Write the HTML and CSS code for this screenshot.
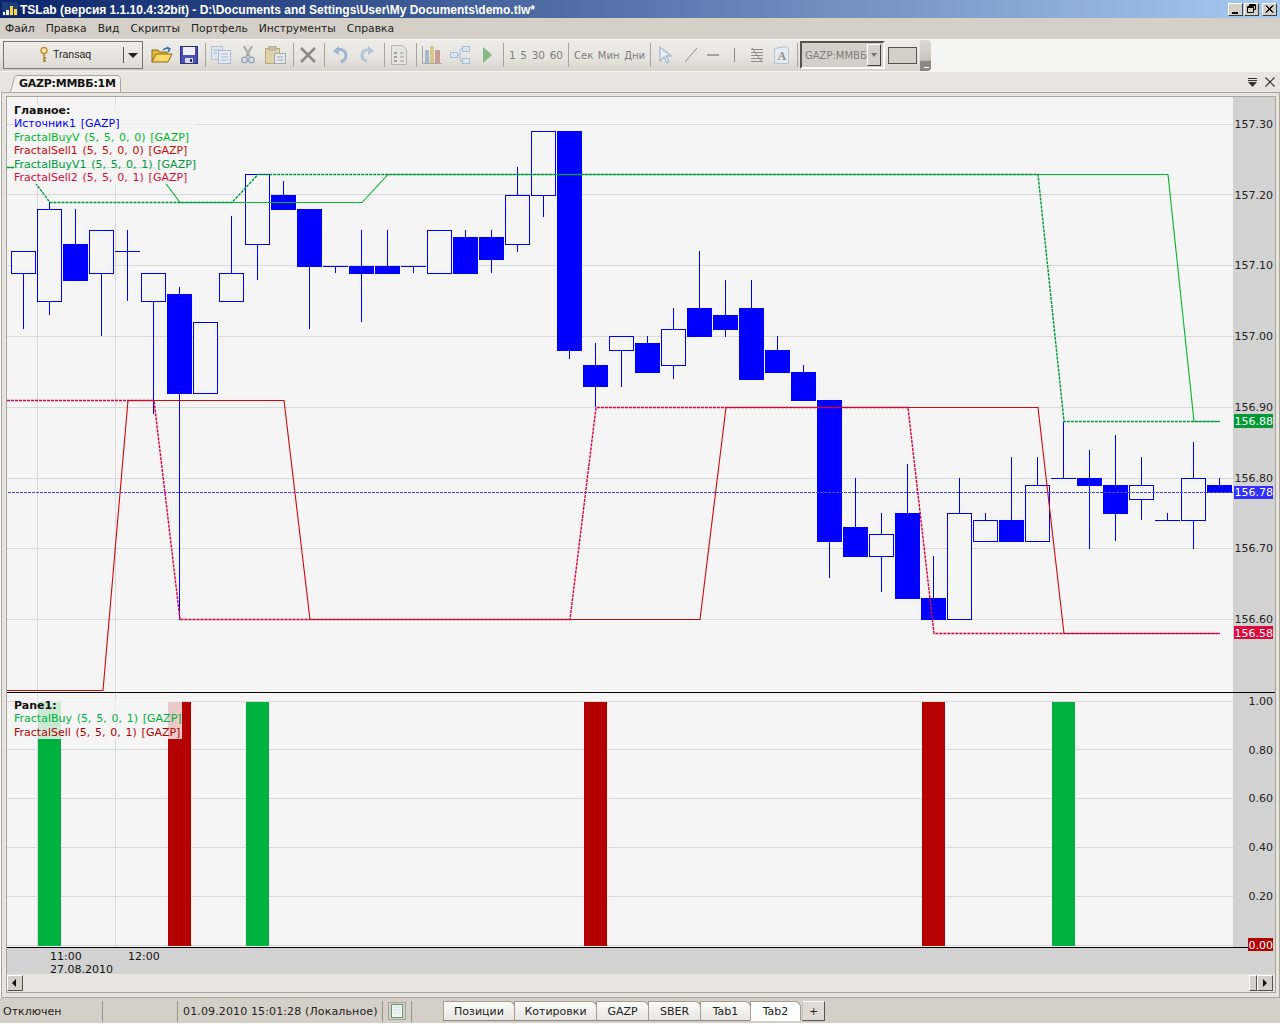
FILE: index.html
```html
<!DOCTYPE html>
<html>
  <head>
    <meta charset="utf-8" />
    <title>TSLab</title>
    <link rel="stylesheet" href="styles.css">
  </head>
  <body>
    <div class="app">
      <div class="titlebar">
        <svg class="app-icon" viewBox="0 0 16 14">
          <rect width="16" height="14" fill="#1c3c78" />
          <rect x="1" y="10" width="2" height="3" fill="#fff" />
          <rect x="4" y="8" width="3" height="5" fill="#fff" />
          <rect x="8" y="4" width="3" height="9" fill="#ffd83c" />
          <rect x="12" y="7" width="3" height="6" fill="#ffd83c" />
        </svg>
        <span class="title-text">TSLab (версия 1.1.10.4:32bit) - D:\Documents and Settings\User\My Documents\demo.tlw*</span>
        <div class="win-btns">
          <span class="win-btn">
            <svg viewBox="0 0 13 11"><rect x="3" y="8" width="6" height="2" /></svg>
          </span>
          <span class="win-btn">
            <svg viewBox="0 0 13 11"><path d="M4.5 2.5V.5h6v5h-2M2.5 2.5h6v6h-6zM2.5 3.5h6M4.5 1.5h6" fill="none" stroke="#000" /></svg>
          </span>
          <span class="win-btn win-close">
            <svg viewBox="0 0 13 11"><path d="M2.5 1.5l7 7M3.5 1.5l7 7M9.5 1.5l-7 7M10.5 1.5l-7 7" fill="none" stroke="#000" /></svg>
          </span>
        </div>
      </div>

      <div class="menubar">
        <span>Файл</span>
        <span>Правка</span>
        <span>Вид</span>
        <span>Скрипты</span>
        <span>Портфель</span>
        <span>Инструменты</span>
        <span>Справка</span>
      </div>

      <div class="toolbar-row">
        <div class="toolbar">
          <div class="conn">
            <svg class="key" viewBox="0 0 8 16">
              <circle cx="4" cy="3.5" r="3" fill="#f8ecc0" stroke="#c08c20" stroke-width="1.4" />
              <path d="M4 6.5V15M4 11h2M4 14h2" fill="none" stroke="#b08020" stroke-width="1.5" />
            </svg>
            <span class="conn-name">Transaq</span>
            <span class="conn-arrow"></span>
          </div>

          <svg class="t-open" viewBox="0 0 22 18">
            <path d="M1 16V4h6l2 2h7v3" fill="#e8b838" stroke="#8a6a18" />
            <path d="M1 16l4-8h16l-4 8z" fill="#f8d868" stroke="#8a6a18" />
            <path d="M12 4q3-3 6-1M16 1l3 2-2 3" fill="none" stroke="#3a70b0" stroke-width="1.5" />
          </svg>
          <svg class="t-save" viewBox="0 0 18 18">
            <rect x=".5" y=".5" width="17" height="17" fill="#4a50b8" stroke="#2a2e80" />
            <rect x="3" y="1" width="12" height="8" fill="#f0f0f8" />
            <rect x="5" y="12" width="8" height="5" fill="#d8d8e0" />
            <rect x="10" y="13" width="2" height="3" fill="#2a2e80" />
          </svg>
          <span class="sep"></span>
          <svg class="t-copy" viewBox="0 0 20 18">
            <rect x=".5" y=".5" width="11" height="13" fill="#dfe5ec" stroke="#b4c2d4" />
            <rect x="7.5" y="4.500" width="12" height="13" fill="#e6ebf1" stroke="#a8bad0" />
            <path d="M10 8h7M10 11h7M10 14h7M3 4h6M3 7h3" stroke="#a8bad0" />
          </svg>
          <svg class="t-cut" viewBox="0 0 14 18">
            <path d="M3 0l6 11M11 0L5 11" stroke="#a8a8a4" stroke-width="2" fill="none" />
            <circle cx="3.5" cy="14" r="2.8" fill="none" stroke="#98acc8" stroke-width="1.5" />
            <circle cx="10.5" cy="14" r="2.8" fill="none" stroke="#98acc8" stroke-width="1.5" />
          </svg>
          <svg class="t-paste" viewBox="0 0 21 18">
            <rect x=".5" y="2.5" width="14" height="15" fill="#e0d2a8" stroke="#b8a878" />
            <rect x="4" y="0" width="7" height="4" fill="#c8c4b8" stroke="#a8a498" />
            <rect x="9.5" y="7.5" width="11" height="10" fill="#e6e8ec" stroke="#a0a8b4" />
            <path d="M12 11h6M12 14h6" stroke="#a0a8b4" />
          </svg>
          <span class="sep"></span>
          <svg class="t-del" viewBox="0 0 18 18">
            <path d="M2 2l14 14M16 2L2 16" stroke="#8a8a86" stroke-width="2.6" />
          </svg>
          <span class="sep"></span>
          <svg class="t-undo" viewBox="0 0 17 18">
            <path d="M4 4q10-2 10 6 0 4-5 6" fill="none" stroke="#9db4d4" stroke-width="3" />
            <path d="M7 0v9L1 5z" fill="#9db4d4" />
          </svg>
          <svg class="t-redo" viewBox="0 0 16 18">
            <path d="M12 4Q3 3 3 10q0 4 5 5" fill="none" stroke="#b4c6de" stroke-width="3" />
            <path d="M9 0v9l6-4z" fill="#b4c6de" />
          </svg>
          <span class="sep sep-9"></span>
          <svg class="t-doc" viewBox="0 0 16 20">
            <path d="M.5.5h11l4 4v15H.5z" fill="#e4e4e2" stroke="#b4b4b0" />
            <path d="M9 8h4M9 12h4M9 16h4" stroke="#a0a09c" />
            <rect x="3" y="7" width="3" height="2" fill="#a0a09c" />
            <rect x="3" y="11" width="3" height="2" fill="#a0a09c" />
            <rect x="3" y="15" width="3" height="2" fill="#a0a09c" />
          </svg>
          <span class="sep sep-9"></span>
          <svg class="t-chart" viewBox="0 0 20 20">
            <path d="M.5 1v17.500H20" fill="none" stroke="#a8a8a4" />
            <rect x="3" y="5" width="4" height="13" fill="#a8b8cc" />
            <rect x="8" y="1" width="4" height="17" fill="#d8c888" />
            <rect x="13" y="5" width="5" height="13" fill="#d09a94" />
          </svg>
          <svg class="t-net" viewBox="0 0 20 18">
            <rect x=".5" y="6.5" width="7" height="5" fill="#dce6f0" stroke="#a4bcd8" />
            <rect x="12.5" y=".5" width="7" height="5" fill="#dce6f0" stroke="#a4bcd8" />
            <rect x="12.5" y="12.5" width="7" height="5" fill="#dce6f0" stroke="#a4bcd8" />
            <path d="M7 9h3V3h3M10 9v6h3" fill="none" stroke="#a4bcd8" />
          </svg>
          <svg class="t-play" viewBox="0 0 9 16"><path d="M0 0l9 8-9 8z" fill="#84b884" /></svg>
          <span class="sep sep-11"></span>
          <div class="periods">
            <span>1</span>
            <span>5</span>
            <span>30</span>
            <span>60</span>
          </div>
          <span class="sep sep-5"></span>
          <div class="units">
            <span>Сек</span>
            <span>Мин</span>
            <span>Дни</span>
          </div>
          <span class="sep sep-5"></span>
          <svg class="t-cursor" viewBox="0 0 13 18">
            <path d="M1 1l11 9H7l3 6-2 1-3-6-4 4z" fill="#eef1f6" stroke="#a8b8d4" stroke-width="1.3" />
          </svg>
          <svg class="t-line" viewBox="0 0 12 14"><path d="M0 14L12 0" stroke="#8c8c88" fill="none" /></svg>
          <svg class="t-dash" viewBox="0 0 12 14"><path d="M0 7h12" stroke="#8c8c88" stroke-width="1.5" fill="none" /></svg>
          <svg class="t-vert" viewBox="0 0 3 14"><path d="M1.5 0v14" stroke="#8c8c88" fill="none" /></svg>
          <svg class="t-hatch" viewBox="0 0 12 14">
            <path d="M0 1.5h12M0 4.5h12M0 7.5h12M0 10.5h12M0 13.5h12M1 0l10 14" stroke="#8c8c88" fill="none" />
          </svg>
          <svg class="t-font" viewBox="0 0 15 18">
            <path d="M.5 2.5l11-2 3 2v15H.5z" fill="#e8eaee" stroke="#b4c2d4" />
            <text x="3.5" y="14" class="t-font-letter">A</text>
          </svg>
          <span class="sep sep-8"></span>
          <div class="combo">
            <span class="combo-text">GAZP:ММВБ</span>
            <span class="combo-btn"></span>
          </div>
          <span class="swatch"></span>
          <span class="grip"></span>
        </div>
      </div>

      <div class="doc-tabs">
        <div class="doc-tab">
          <svg class="doc-tab-shape" viewBox="0 0 111 17">
            <path d="M.5 17L4.5 2.5Q5 .5 7 .5h99q4.5 0 4.5 4V17" />
          </svg>
          <span class="doc-tab-text">GAZP:ММВБ:1М</span>
        </div>
        <div class="doc-tab-tools">
          <svg class="tab-list" viewBox="0 0 9 9">
            <path d="M0 .5h9M0 2.5h9" stroke="#333" fill="none" />
            <path d="M0 4h9L4.5 9z" fill="#333" />
          </svg>
          <svg class="tab-close" viewBox="0 0 10 10">
            <path d="M.5.5l9 9M9.5.5l-9 9" stroke="#333" stroke-width="1.2" fill="none" />
          </svg>
        </div>
      </div>

      <div class="panel">
        <div class="panel-inner">
          <div class="pane pane-main">
            <svg class="plot" viewBox="7 97 1268 596">
              <rect x="7" y="97" width="1226" height="595" class="plot-bg" />
              <rect x="1233" y="97" width="42" height="595" class="axis-bg" />

              <path class="grid" d="M37.5 97V692M115.5 97V692M7 124.5H1233M7 194.5H1233M7 265.5H1233M7 336.5H1233M7 407.5H1233M7 478.5H1233M7 548.5H1233M7 619.5H1233" />

              <path class="wick" d="M23.5 273V329M49.5 202V315M75.5 209V244M101.5 273V336M127.5 230V301M153.5 301V414M179.5 287V620M231.5 216V273M257.5 244V280M283.5 181V195M309.5 267V329M335.5 266V273M361.5 230V322M387.5 230V266M413.5 266V273M465.5 230V237M491.5 230V273M517.5 167V252M543.5 195V217M569.5 351V359M595.5 343V407M621.5 350V387M647.5 336V343M673.5 308V379M699.5 251V308M725.5 280V337M751.5 280V308M777.5 336V350M803.5 365V372M829.5 542V578M855.5 478V527M881.5 513V592M907.5 464V513M933.5 556V598M959.5 478V513M985.5 513V520M1011.5 457V520M1037.5 457V485M1063.5 422V478M1089.5 450V549M1115.5 435V541M1141.5 457V520M1167.5 513V520M1193.5 442V549M1219.5 478V485" />
              <path class="wick" d="M115 251.5H140M323 266.5H348M401 266.5H426M1051 478.5H1076M1155 520.5H1180" />

              <g class="hollow">
                <rect x="11.5" y="251.5" width="24" height="22" />
                <rect x="37.5" y="209.5" width="24" height="92" />
                <rect x="89.5" y="230.5" width="24" height="43" />
                <rect x="141.5" y="273.5" width="24" height="28" />
                <rect x="193.5" y="322.5" width="24" height="71" />
                <rect x="219.5" y="273.5" width="24" height="28" />
                <rect x="245.5" y="174.5" width="24" height="70" />
                <rect x="427.5" y="230.5" width="24" height="43" />
                <rect x="505.5" y="195.5" width="24" height="49" />
                <rect x="531.5" y="131.5" width="24" height="64" />
                <rect x="609.5" y="336.5" width="24" height="14" />
                <rect x="661.5" y="329.5" width="24" height="36" />
                <rect x="869.5" y="534.5" width="24" height="22" />
                <rect x="947.5" y="513.5" width="24" height="106" />
                <rect x="973.5" y="520.5" width="24" height="21" />
                <rect x="1025.5" y="485.5" width="24" height="56" />
                <rect x="1129.5" y="485.5" width="24" height="14" />
                <rect x="1181.5" y="478.5" width="24" height="42" />
              </g>
              <g class="filled">
                <rect x="63" y="244" width="25" height="37" />
                <rect x="167" y="294" width="25" height="100" />
                <rect x="271" y="195" width="25" height="15" />
                <rect x="297" y="209" width="25" height="58" />
                <rect x="349" y="266" width="25" height="8" />
                <rect x="375" y="266" width="25" height="8" />
                <rect x="453" y="237" width="25" height="37" />
                <rect x="479" y="237" width="25" height="23" />
                <rect x="557" y="131" width="25" height="220" />
                <rect x="583" y="365" width="25" height="22" />
                <rect x="635" y="343" width="25" height="30" />
                <rect x="687" y="308" width="25" height="29" />
                <rect x="713" y="315" width="25" height="15" />
                <rect x="739" y="308" width="25" height="72" />
                <rect x="765" y="350" width="25" height="23" />
                <rect x="791" y="372" width="25" height="29" />
                <rect x="817" y="400" width="25" height="142" />
                <rect x="843" y="527" width="25" height="30" />
                <rect x="895" y="513" width="25" height="86" />
                <rect x="921" y="598" width="25" height="22" />
                <rect x="999" y="520" width="25" height="22" />
                <rect x="1077" y="478" width="25" height="8" />
                <rect x="1103" y="485" width="25" height="29" />
                <rect x="1207" y="485" width="25" height="8" />
              </g>

              <path class="price-line" d="M8 492.5H1233" />
              <polyline class="line buy" points="7,167.5 154,167.5 180,202.5 362,202.5 388,174.5 1168,174.5 1194,421.5 1220,421.5" />
              <polyline class="line sell" points="7,690.5 103,690.5 128,400.5 284,400.5 310,619.5 700,619.5 726,407.5 1038,407.5 1064,633.5 1220,633.5" />
              <polyline class="line buy-dash" points="7,167.5 24,167.5 50,202.5 232,202.5 258,174.5 1038,174.5 1064,421.5 1220,421.5" />
              <polyline class="line sell-dash" points="7,400.5 154,400.5 180,619.5 570,619.5 596,407.5 908,407.5 934,633.5 1220,633.5" />

              <path class="pane-rule" d="M7 692.5H1275" />

              <g class="axis">
                <text x="1273" y="128">157.30</text>
                <text x="1273" y="199">157.20</text>
                <text x="1273" y="269">157.10</text>
                <text x="1273" y="340">157.00</text>
                <text x="1273" y="411">156.90</text>
                <text x="1273" y="482">156.80</text>
                <text x="1273" y="552">156.70</text>
                <text x="1273" y="623">156.60</text>
              </g>
              <rect x="1234" y="414" width="39" height="14" class="badge-green" />
              <text x="1273" y="425" class="badge-text">156.88</text>
              <rect x="1234" y="486" width="39" height="13" class="badge-blue" />
              <text x="1273" y="496" class="badge-text">156.78</text>
              <rect x="1234" y="626" width="39" height="13" class="badge-crimson" />
              <text x="1273" y="637" class="badge-text">156.58</text>
            </svg>
            <div class="legend">
              <span class="legend-title">Главное:</span>
              <span class="c-blue">Источник1 [GAZP]</span>
              <span class="c-buy">FractalBuyV (5, 5, 0, 0) [GAZP]</span>
              <span class="c-sell">FractalSell1 (5, 5, 0, 0) [GAZP]</span>
              <span class="c-buy-dash">FractalBuyV1 (5, 5, 0, 1) [GAZP]</span>
              <span class="c-sell-dash">FractalSell2 (5, 5, 0, 1) [GAZP]</span>
            </div>
          </div>

          <div class="pane pane-sub">
            <svg class="plot" viewBox="7 693 1268 255">
              <rect x="7" y="693" width="1226" height="254" class="plot-bg" />
              <rect x="1233" y="693" width="42" height="254" class="axis-bg" />
              <path class="grid" d="M37.5 693V948M115.5 693V948M7 701.5H1233M7 749.5H1233M7 798.5H1233M7 847.5H1233M7 896.5H1233M7 945.5H1233" />
              <g class="bar-buy">
                <rect x="38" y="702" width="23" height="244" />
                <rect x="246" y="702" width="23" height="244" />
                <rect x="1052" y="702" width="23" height="244" />
              </g>
              <g class="bar-sell">
                <rect x="168" y="702" width="23" height="244" />
                <rect x="584" y="702" width="23" height="244" />
                <rect x="922" y="702" width="23" height="244" />
              </g>
              <path class="pane-rule" d="M7 947.5H1248" />
              <g class="axis">
                <text x="1273" y="705">1.00</text>
                <text x="1273" y="754">0.80</text>
                <text x="1273" y="802">0.60</text>
                <text x="1273" y="851">0.40</text>
                <text x="1273" y="900">0.20</text>
              </g>
              <rect x="1248" y="938" width="25" height="13" class="badge-red" />
              <text x="1273" y="949" class="badge-text">0.00</text>
            </svg>
            <div class="legend legend-sub">
              <span class="legend-title">Pane1:</span>
              <span class="c-bar-buy">FractalBuy (5, 5, 0, 1) [GAZP]</span>
              <span class="c-bar-sell">FractalSell (5, 5, 0, 1) [GAZP]</span>
            </div>
          </div>

          <div class="time-axis">
            <div class="tick">
              <span>11:00</span>
              <span>27.08.2010</span>
            </div>
            <div class="tick">
              <span>12:00</span>
            </div>
          </div>

          <div class="scrollbar">
            <span class="scroll-btn"><span class="arrow-left"></span></span>
            <span class="scroll-thumb"></span>
            <span class="scroll-btn"><span class="arrow-right"></span></span>
          </div>
        </div>
      </div>

      <div class="statusbar">
        <div class="cell cell-state">Отключен</div>
        <div class="cell cell-empty"></div>
        <div class="cell cell-time">01.09.2010 15:01:28 (Локальное)</div>
        <div class="cell cell-icon">
          <svg class="note" viewBox="0 0 18 18">
            <rect x=".5" y=".5" width="17" height="17" fill="none" stroke="#777" stroke-dasharray="1 1" />
            <rect x="3.5" y="2.5" width="11" height="13" fill="#f4f8f4" stroke="#6a9a6a" />
            <path d="M5 5h8M5 8h8M5 11h8" stroke="#c8d8e8" />
          </svg>
        </div>
        <div class="sheet-tabs">
          <span class="sheet-tab tab-pos">Позиции</span>
          <span class="sheet-tab tab-quotes">Котировки</span>
          <span class="sheet-tab tab-gazp">GAZP</span>
          <span class="sheet-tab tab-sber">SBER</span>
          <span class="sheet-tab tab-1">Tab1</span>
          <span class="sheet-tab tab-2 active">Tab2</span>
          <span class="sheet-add">+</span>
        </div>
      </div>
    </div>
  </body>
</html>
```

FILE: styles.css
```css
body {
  margin: 0;
  background: #fff;
  font-family: "DejaVu Sans", sans-serif;
  font-size: 11px;
  color: #111;
}

svg {
  display: block;
  flex: none;
}

.app {
  display: flex;
  flex-direction: column;
  width: 1280px;
  height: 1023px;
  overflow: hidden;
}

/* title bar */

.titlebar {
  display: flex;
  align-items: center;
  height: 18px;
  padding-left: 2px;
  background: linear-gradient(90deg, #0a246a 0%, #a6caf0 100%);
  color: #fff;
}

.app-icon {
  width: 16px;
  height: 14px;
}

.title-text {
  margin-left: 2px;
  padding-top: 1px;
  font-family: "Liberation Sans", sans-serif;
  font-size: 12px;
  font-weight: 700;
  white-space: nowrap;
}

.win-btns {
  display: flex;
  margin-left: auto;
  margin-right: 3px;
}

.win-btn {
  width: 15px;
  height: 13px;
  background: #d4d0c8;
  border: 1px solid;
  border-color: #fff #404040 #404040 #fff;
  box-sizing: border-box;
}

.win-btn + .win-btn {
  margin-left: 1px;
}

.win-btn.win-close {
  margin-left: 3px;
}

/* menu */

.menubar {
  display: flex;
  align-items: center;
  gap: 11px;
  height: 21px;
  padding-left: 5px;
  background: #d4d0c8;
  font-size: 10.75px;
  color: #222;
}

/* toolbar */

.toolbar-row {
  height: 33px;
  padding: 1px 0;
  box-sizing: border-box;
  background: #f5f5f3;
}

.toolbar {
  display: flex;
  align-items: center;
  width: 931px;
  height: 31px;
  padding: 1px 0 2px 3px;
  box-sizing: border-box;
  background: linear-gradient(180deg, #eeede9 0%, #e6e4df 60%, #d6d3cb 100%);
  border-radius: 0 4px 4px 0;
  color: #7d7d7d;
}

.conn {
  display: flex;
  align-items: center;
  width: 140px;
  height: 28px;
  padding-left: 36px;
  box-sizing: border-box;
  border: 1px solid #77756e;
  background: linear-gradient(180deg, #eeede9 0%, #dedcd5 100%);
  color: #222;
}

.key {
  width: 8px;
  height: 16px;
}

.conn-name {
  flex: 1;
  margin: -2px 0 0 5px;
  font-family: "Liberation Sans", sans-serif;
  font-size: 10.5px;
}

.conn-arrow {
  position: relative;
  width: 19px;
  height: 16px;
  box-sizing: border-box;
  border-left: 1px solid #555;
}

.conn-arrow::after {
  content: "";
  position: absolute;
  left: 4px;
  top: 6px;
  border-style: solid;
  border-width: 5px 5px 0;
  border-color: #222 transparent transparent;
}

.sep {
  flex: none;
  width: 1px;
  height: 24px;
  margin-left: 7px;
  background: #a8a59e;
}

.sep-5 { margin-left: 5px; }
.sep-8 { margin-left: 8px; }
.sep-9 { margin-left: 9px; }
.sep-11 { margin-left: 11px; }

.t-open { width: 22px; height: 18px; margin-left: 8px; }
.t-save { width: 18px; height: 18px; margin-left: 7px; }
.t-copy { width: 20px; height: 18px; margin-left: 5px; }
.t-cut { width: 14px; height: 18px; margin-left: 10px; }
.t-paste { width: 21px; height: 18px; margin-left: 10px; }
.t-del { width: 18px; height: 18px; margin-left: 5px; }
.t-undo { width: 17px; height: 18px; margin-left: 7px; }
.t-redo { width: 16px; height: 18px; margin-left: 10px; }
.t-doc { width: 16px; height: 20px; margin-left: 6px; }
.t-chart { width: 20px; height: 20px; margin-left: 5px; }
.t-net { width: 20px; height: 18px; margin-left: 8px; }
.t-play { width: 9px; height: 16px; margin-left: 13px; }
.t-cursor { width: 13px; height: 18px; margin-left: 8px; }
.t-line { width: 12px; height: 14px; margin-left: 13px; }
.t-dash { width: 12px; height: 14px; margin-left: 10px; }
.t-vert { width: 3px; height: 14px; margin-left: 14px; }
.t-hatch { width: 12px; height: 14px; margin-left: 15px; }
.t-font { width: 15px; height: 18px; margin-left: 11px; }

.t-font-letter {
  font-family: "Liberation Serif", serif;
  font-size: 12px;
  font-weight: 700;
  fill: #8c8c88;
}

.periods {
  display: flex;
  justify-content: space-between;
  width: 54px;
  margin-left: 5px;
  font-size: 10.5px;
}

.units {
  display: flex;
  justify-content: space-between;
  width: 71px;
  margin-left: 5px;
  font-size: 10px;
}

.combo {
  display: flex;
  align-items: center;
  justify-content: space-between;
  width: 85px;
  height: 28px;
  margin-left: 2px;
  padding: 0 2px 0 3px;
  box-sizing: border-box;
  border: 2px solid;
  border-color: #55534e #fff #fff #55534e;
  background: #d4d0c8;
  font-size: 10px;
}

.combo-text {
  white-space: nowrap;
}

.combo-btn {
  position: relative;
  width: 14px;
  height: 22px;
  box-sizing: border-box;
  border: 1px solid;
  border-color: #fff #404040 #404040 #fff;
}

.combo-btn::after {
  content: "";
  position: absolute;
  left: 3px;
  top: 8px;
  border-style: solid;
  border-width: 4px 3px 0;
  border-color: #777 transparent transparent;
}

.swatch {
  width: 29px;
  height: 17px;
  margin-left: 3px;
  box-sizing: border-box;
  border: 1px solid #55534e;
  background: #d4d0c8;
}

.grip {
  position: relative;
  align-self: stretch;
  width: 11px;
  margin: -1px 0 -2px 3px;
  background: linear-gradient(180deg, #dcdad4 0%, #c8c5be 65%, #8a8882 70%, #8a8882 100%);
  border-radius: 0 4px 4px 0;
}

.grip::after {
  content: "";
  position: absolute;
  right: 2px;
  bottom: 3px;
  width: 5px;
  height: 1px;
  background: #fff;
  box-shadow: 2px 2px 0 -0.5px #fff;
}

/* document tab strip */

.doc-tabs {
  display: flex;
  justify-content: space-between;
  height: 20px;
  background: #e7e5e0;
}

.doc-tab {
  position: relative;
  width: 111px;
  height: 17px;
  margin: 3px 0 0 10px;
}

.doc-tab-shape {
  position: absolute;
  left: 0;
  top: 0;
  width: 111px;
  height: 17px;
  fill: #f2f1ee;
  stroke: #a8a59e;
}

.doc-tab-text {
  position: relative;
  display: block;
  padding: 2px 0 0 9px;
  font-weight: 700;
  font-size: 11px;
  letter-spacing: -0.25px;
  white-space: nowrap;
}

.doc-tab-tools {
  display: flex;
  align-items: center;
  gap: 8px;
  margin-right: 5px;
}

.tab-list {
  width: 9px;
  height: 9px;
}

.tab-close {
  width: 10px;
  height: 10px;
}

/* chart panel */

.panel {
  width: 1279px;
  height: 906px;
  margin-left: 1px;
  padding: 3px 3px 4px 4px;
  box-sizing: border-box;
  border: 1px solid #aaa79f;
  background: #e7e5e0;
}

.panel-inner {
  display: flex;
  flex-direction: column;
  height: 100%;
  box-sizing: border-box;
  border: 1px solid #a8a59e;
}

.pane {
  position: relative;
  width: 1268px;
}

.pane-main {
  height: 596px;
}

.pane-sub {
  height: 255px;
}

.plot {
  position: absolute;
  left: 0;
  top: 0;
  z-index: 1;
  width: 1268px;
  height: 100%;
  overflow: visible;
}

.plot-bg { fill: #f5f5f5; }
.axis-bg { fill: #d2d2d2; }

.grid {
  fill: none;
  stroke: #d9d9d9;
  shape-rendering: crispEdges;
}

.wick {
  fill: none;
  stroke: #0000ff;
  shape-rendering: crispEdges;
}

.hollow rect {
  fill: #f5f5f5;
  stroke: #0000ff;
  shape-rendering: crispEdges;
}

.filled rect {
  fill: #0000ff;
  shape-rendering: crispEdges;
}

.line {
  fill: none;
  stroke-width: 1.1;
}

.buy { stroke: #00b828; }
.sell { stroke: #cc0a0a; }

.buy-dash {
  stroke: #009a3c;
  stroke-width: 1.4;
  stroke-dasharray: 3 1;
}

.sell-dash {
  stroke: #e0003c;
  stroke-width: 1.4;
  stroke-dasharray: 3 1;
}

.price-line {
  fill: none;
  stroke: #4848ff;
  stroke-dasharray: 3 1;
  shape-rendering: crispEdges;
}

.pane-rule {
  fill: none;
  stroke: #000;
  shape-rendering: crispEdges;
}

.axis text,
.badge-text {
  font-size: 11px;
  text-anchor: end;
  fill: #222;
}

.badge-text { fill: #fff; }

.badge-green { fill: #009933; }
.badge-blue { fill: #3030ff; }
.badge-crimson { fill: #dc0a3c; }
.badge-red { fill: #b40000; }

.bar-buy rect {
  fill: #00b140;
  shape-rendering: crispEdges;
}

.bar-sell rect {
  fill: #b40000;
  shape-rendering: crispEdges;
}

.legend {
  position: absolute;
  left: 7px;
  top: 7px;
  z-index: 2;
  display: flex;
  flex-direction: column;
  align-items: flex-start;
  background: rgba(245, 245, 245, 0.82);
  font-size: 11px;
  line-height: 13.4px;
  word-spacing: 1.25px;
  white-space: nowrap;
}

.legend-sub {
  top: 6px;
}

.legend-title {
  font-weight: 700;
  color: #111;
}

.c-blue { color: #0000ff; }
.c-buy { color: #00b828; }
.c-sell { color: #cc0a0a; }
.c-buy-dash { color: #009a3c; }
.c-sell-dash { color: #dc0a3c; }
.c-bar-buy { color: #00b140; }
.c-bar-sell { color: #b40000; }

.time-axis {
  display: flex;
  height: 26px;
  padding: 2px 0 0 43px;
  box-sizing: border-box;
  background: #d2d2d2;
  line-height: 13px;
}

.tick {
  display: flex;
  flex-direction: column;
  width: 78px;
  white-space: nowrap;
}

.scrollbar {
  display: flex;
  align-items: flex-start;
  height: 18px;
  padding: 1px 2px 0 0;
  box-sizing: border-box;
}

.scroll-btn {
  position: relative;
  width: 16px;
  height: 16px;
  box-sizing: border-box;
  border: 1px solid;
  border-color: #fff #55534e #55534e #fff;
  background: #d4d0c8;
}

.scroll-thumb {
  width: 8px;
  height: 16px;
  margin-left: auto;
  box-sizing: border-box;
  border: 1px solid;
  border-color: #fff #55534e #55534e #fff;
  background: #d4d0c8;
}

.arrow-left,
.arrow-right {
  position: absolute;
  left: 4px;
  top: 3px;
  border-style: solid;
  border-color: transparent;
}

.arrow-left {
  border-width: 4px 4px 4px 0;
  border-right-color: #111;
}

.arrow-right {
  left: 5px;
  border-width: 4px 0 4px 4px;
  border-left-color: #111;
}

/* status bar */

.statusbar {
  display: flex;
  align-items: center;
  height: 25px;
  padding-top: 1px;
  box-sizing: border-box;
  background: #d4d0c8;
  color: #222;
}

.cell {
  display: flex;
  align-items: center;
  height: 21px;
  box-sizing: border-box;
  border-right: 1px solid #96938b;
  white-space: nowrap;
}

.cell-state {
  width: 103px;
  padding-left: 3px;
}

.cell-empty {
  width: 75px;
}

.cell-time {
  width: 205px;
  padding-left: 5px;
  letter-spacing: 0.13px;
}

.cell-icon {
  width: 29px;
  padding-left: 5px;
}

.note {
  width: 18px;
  height: 18px;
}

.sheet-tabs {
  display: flex;
  align-items: flex-end;
  height: 20px;
  margin-left: 31px;
}

.sheet-tab {
  display: flex;
  align-items: center;
  justify-content: center;
  height: 20px;
  box-sizing: border-box;
  border: 1px solid #a09d95;
  border-bottom: 1px solid #8a877f;
  border-radius: 0 6px 0 0;
  margin-right: -1px;
  background: linear-gradient(180deg, #fbfbfa 0%, #e8e6e2 100%);
  white-space: nowrap;
}

.tab-pos { width: 72px; }
.tab-quotes { width: 83px; }
.tab-gazp { width: 53px; }
.tab-sber { width: 53px; }
.tab-1 { width: 51px; }
.tab-2 { width: 51px; }

.sheet-tab.active {
  background: #fff;
  border-bottom-color: #fff;
}

.sheet-add {
  display: flex;
  align-items: center;
  justify-content: center;
  width: 23px;
  height: 20px;
  margin-left: 2px;
  box-sizing: border-box;
  border: 1px solid;
  border-color: #fff #55534e #55534e #c8c5bd;
  background: #dedbd4;
}
```
